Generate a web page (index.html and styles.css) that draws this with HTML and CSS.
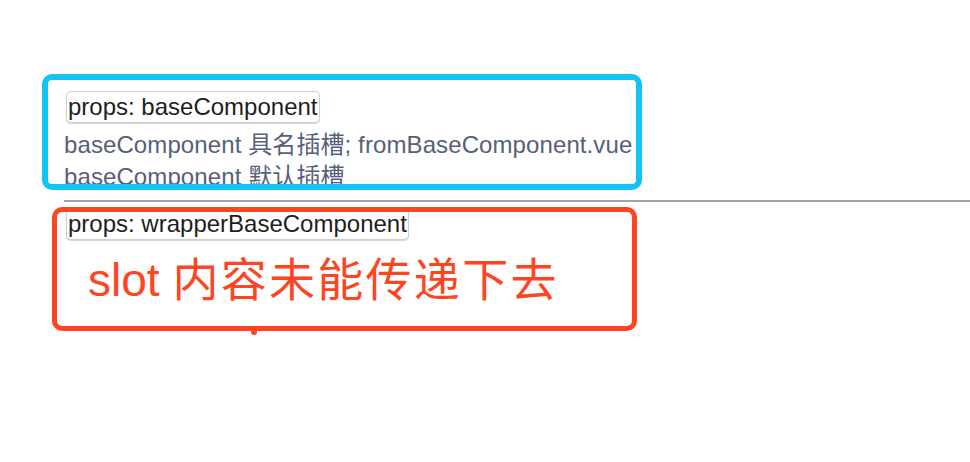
FILE: index.html
```html
<!DOCTYPE html>
<html lang="zh-CN">
<head>
<meta charset="utf-8">
<title>slot demo</title>
<link rel="stylesheet" href="styles.css">
</head>
<body>
<div class="page">
  <button class="prop-btn">props: baseComponent</button>
  <div class="slot-line first">baseComponent 具名插槽; fromBaseComponent.vue</div>
  <div class="slot-line">baseComponent 默认插槽</div>
  <hr class="divider">
  <button class="prop-btn">props: wrapperBaseComponent</button>
</div>
<div class="note note-blue"></div>
<div class="note note-red">
  <span class="note-text">slot <span class="note-cjk">内容未能传递下去</span></span>
  <span class="note-tail"></span>
</div>
</body>
</html>
```
FILE: styles.css
```css
html, body {
  margin: 0;
  padding: 0;
  background: #ffffff;
}
body {
  width: 970px;
  height: 462px;
  overflow: hidden;
  position: relative;
  font-family: "Liberation Sans", Arial, "Noto Sans CJK SC", sans-serif;
}
.page {
  padding: 91px 0 0 64px;
  display: flex;
  flex-direction: column;
  align-items: flex-start;
}
.prop-btn {
  font-family: "Liberation Sans", Arial, "Noto Sans CJK SC", sans-serif;
  font-size: 24px;
  line-height: 30px;
  height: 32px;
  padding: 0 1px;
  margin: 0 0 0 2px;
  color: #1e1e1e;
  background: #ffffff;
  border: 1px solid #cfcfcf;
  border-radius: 5px;
  box-shadow: 0 1px 1px rgba(0, 0, 0, 0.18);
}
.slot-line {
  font-size: 24px;
  line-height: 32px;
  letter-spacing: 0.1px;
  color: #56607a;
  white-space: nowrap;
}
.slot-line.first {
  margin-top: 6px;
}
.divider {
  align-self: stretch;
  margin: 7px 0 6px 0;
  height: 0;
  border: 0;
  border-top: 2px solid #a3a3a3;
}
.note {
  position: absolute;
  box-sizing: border-box;
  border-radius: 10px;
}
.note-blue {
  left: 42px;
  top: 74px;
  width: 600px;
  height: 116px;
  border: 6px solid #12c3f6;
}
.note-red {
  left: 52px;
  top: 207px;
  width: 585px;
  height: 124px;
  border: 5px solid #ff4422;
}
.note-text {
  position: absolute;
  left: 31px;
  top: 38px;
  font-family: "Liberation Sans", Arial, "Noto Sans CJK SC", sans-serif;
  font-size: 46px;
  line-height: 60px;
  color: #ff4422;
  white-space: nowrap;
}
.note-cjk {
  letter-spacing: 2.3px;
}
.note-tail {
  position: absolute;
  left: 194px;
  bottom: -9px;
  width: 6px;
  height: 5px;
  border-radius: 0 0 3px 3px;
  background: #ff4422;
}
```
